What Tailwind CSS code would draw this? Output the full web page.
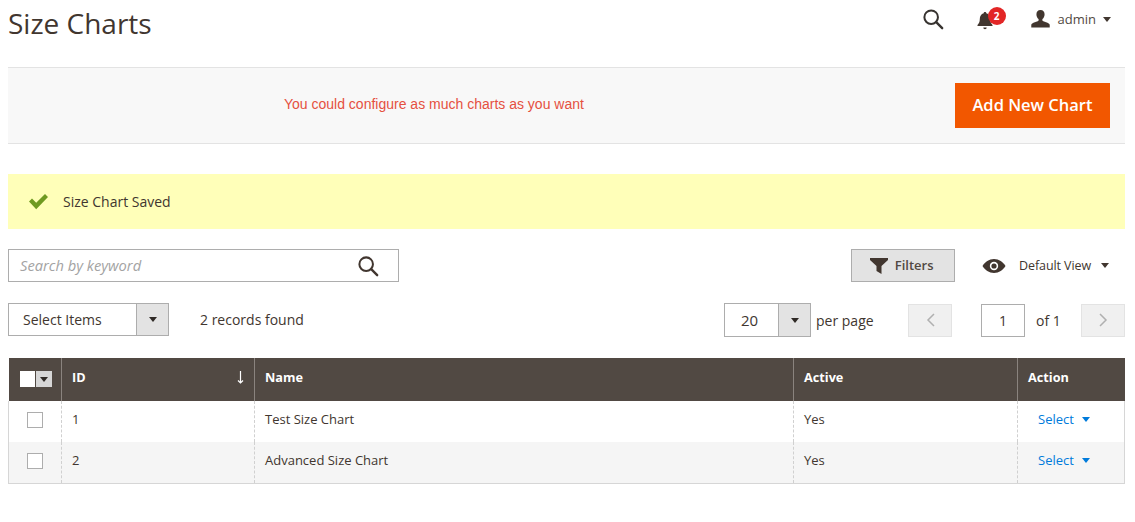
<!DOCTYPE html>
<html lang="en">
<head>
  <meta charset="UTF-8">
  <title>Size Charts</title>
  <script src="https://cdn.jsdelivr.net/npm/@tailwindcss/browser@4"></script>
</head>
<body class="bg-white font-['Open_Sans',sans-serif] text-[#41362f] overflow-hidden">
  <div class="w-[1135px] h-[522px] pl-2 pr-[10px]">

    <!-- Page header -->
    <header class="h-[67px] flex items-start justify-between">
      <h1 class="text-[28px] leading-[38px] mt-[4px] text-[#41362f]">Size Charts</h1>
      <div class="flex items-center mt-[7px] h-[24px]">
        <svg class="w-[22px] h-[22px] mr-[33px]" viewBox="0 0 24 24" fill="none" stroke="#373330" stroke-width="2.2"><circle cx="10" cy="10" r="7.4"/><path d="M15.5 15.5 22 22" stroke-linecap="round" stroke-width="2.6"/></svg>
        <div class="relative w-[16px] h-[20px] mr-[38px]">
          <svg class="w-[16px] h-[20px] mt-[2px]" viewBox="0 0 16 20" fill="#41362f"><path d="M8 1c.8 0 1.3.5 1.3 1.2C12 3 13.2 5.300 13.200 8c0 3 .8 4.500 2.300 6v1H.5v-1C2 12.500 2.800 11 2.800 8c0-2.700 1.200-5 3.900-5.800C6.700 1.500 7.200 1 8 1Z"/><path d="M6.300 16.500h3.400A1.700 1.700 0 0 1 8 18.300a1.700 1.700 0 0 1-1.700-1.800Z"/></svg>
          <span class="absolute -top-[2px] left-[11px] w-[18px] h-[18px] rounded-full bg-[#e22626] text-white text-[10px] leading-[18px] font-bold text-center">2</span>
        </div>
        <svg class="w-[19px] h-[18px] mr-[8px]" viewBox="0 0 20 20" preserveAspectRatio="none" fill="#41362f"><path d="M10 0c2.800 0 4.300 2 4.300 4.800 0 2.200-.9 4.200-2.200 5.300-.3.900-.2 1.800.5 2.200 2.500 1.200 6.400 1.900 7.100 4.200V19.500H.3v-3c.7-2.300 4.600-3 7.100-4.200.7-.4.800-1.300.5-2.200C6.600 9 5.700 7 5.700 4.800 5.700 2 7.200 0 10 0Z"/></svg>
        <span class="text-[13px] leading-[24px] -mt-px text-[#514943] mr-[7px]">admin</span>
        <span class="w-0 h-0 border-x-[4px] border-x-transparent border-t-[5px] border-t-[#41362f] mr-[14px]"></span>
      </div>
    </header>

    <!-- Action bar -->
    <div class="h-[77px] bg-[#f8f8f8] border-y border-[#e3e3e3] flex items-center justify-between pr-[15px]">
      <p class="ml-[276px] font-['Liberation_Sans',sans-serif] text-[14px] text-[#e5503f] -mt-[3px]">You could configure as much charts as you want</p>
      <button class="w-[155px] h-[45px] bg-[#f25700] text-white text-[16.500px] font-semibold">Add New Chart</button>
    </div>

    <!-- Success message -->
    <div class="h-[55px] mt-[30px] bg-[#ffffb9] flex items-center pl-[20px]">
      <svg class="w-[21px] h-[17px] mr-[14px]" viewBox="0 0 21 17" fill="#6f9a21"><path d="M1 8.600 4 5.600l4.200 4.200L17 1l3 3-11.800 12.200Z"/></svg>
      <span class="text-[14px] text-[#41362f]">Size Chart Saved</span>
    </div>

    <!-- Search and view -->
    <div class="h-[33px] mt-[20px] flex items-center justify-between">
      <div class="w-[391px] h-[33px] border border-[#adadad] flex items-center justify-between pl-[11px] pr-[19px]">
        <span class="text-[14.700px] italic text-[#a3a3a3]">Search by keyword</span>
        <svg class="w-[22px] h-[22px]" viewBox="0 0 24 24" fill="none" stroke="#41362f" stroke-width="2.200"><circle cx="10" cy="10" r="7.400"/><path d="M15.500 15.500 22 22" stroke-linecap="round" stroke-width="2.600"/></svg>
      </div>
      <div class="flex items-center">
        <button class="w-[104px] h-[33px] pr-[3px] bg-[#e3e3e3] border border-[#adadad] flex items-center justify-center gap-[7px] text-[13px] font-semibold text-[#514943]">
          <svg class="w-[18px] h-[16px]" viewBox="0 0 18 16" fill="#41362f"><path d="M0 0h18v2l-6.500 6v8l-5-3V8L0 2Z"/></svg>
          Filters
        </button>
        <svg class="w-[24px] h-[16px] ml-[27px]" viewBox="0 0 24 16"><path fill="#41362f" d="M12 1c5 0 9 3 11.500 7C21 12 17 15 12 15S3 12 .5 8C3 4 7 1 12 1Z"/><circle cx="12" cy="8" r="4.200" fill="#fff"/><circle cx="12" cy="8" r="2.600" fill="#41362f"/></svg>
        <span class="text-[12.500px] mt-px tracking-[-0.1px] text-[#41362f] ml-[13px] mr-[10px]">Default View</span>
        <span class="w-0 h-0 border-x-[4px] border-x-transparent border-t-[5px] border-t-[#41362f] mr-[16px]"></span>
      </div>
    </div>

    <!-- Mass actions and pager -->
    <div class="h-[34px] mt-[21px] flex items-start justify-between">
      <div class="flex items-center">
        <div class="w-[161px] h-[33px] border border-[#adadad] flex">
          <span class="flex-1 pl-[14px] text-[14px] leading-[31px] text-[#41362f]">Select Items</span>
          <span class="w-[32px] bg-[#e3e3e3] border-l border-[#adadad] flex items-center justify-center"><span class="w-0 h-0 border-x-[4px] border-x-transparent border-t-[5px] border-t-[#2f2a26]"></span></span>
        </div>
        <span class="ml-[31px] text-[14px] text-[#41362f]">2 records found</span>
      </div>
      <div class="flex items-center h-[34px]">
        <div class="w-[87px] h-[34px] border border-[#adadad] flex">
          <span class="flex-1 pr-[4px] text-center text-[15px] leading-[32px] text-[#41362f]">20</span>
          <span class="w-[32px] bg-[#e3e3e3] border-l border-[#adadad] flex items-center justify-center"><span class="w-0 h-0 border-x-[4px] border-x-transparent border-t-[5px] border-t-[#2f2a26]"></span></span>
        </div>
        <span class="ml-[5px] text-[14px] text-[#41362f] w-[92px]">per page</span>
        <span class="w-[44px] h-[33px] bg-[#f0f0f0] border border-[#e3e3e3] flex items-center justify-center">
          <svg class="w-[9px] h-[14px]" viewBox="0 0 9 14" fill="none" stroke="#b0b0b0" stroke-width="1.500"><path d="M8 1 2 7l6 6"/></svg>
        </span>
        <span class="w-[44px] h-[33px] ml-[29px] border border-[#adadad] text-center text-[14px] leading-[31px] text-[#41362f]">1</span>
        <span class="ml-[11px] text-[14px] text-[#41362f] w-[45px]">of 1</span>
        <span class="w-[44px] h-[33px] bg-[#f0f0f0] border border-[#e3e3e3] flex items-center justify-center">
          <svg class="w-[9px] h-[14px]" viewBox="0 0 9 14" fill="none" stroke="#b0b0b0" stroke-width="1.500"><path d="m1 1 6 6-6 6"/></svg>
        </span>
      </div>
    </div>

    <!-- Grid -->
    <table class="mt-[21px] w-[1117px] table-fixed border-collapse text-[13px] text-[#41362f]">
      <thead>
        <tr class="h-[43px] bg-[#514943] text-white text-left text-[12.700px] font-bold">
          <th class="w-[53px] pb-[1px] border-r border-[#8a837e]">
            <div class="ml-[11px] flex w-[32px] h-[16px]">
              <span class="w-[15px] bg-white"></span>
              <span class="flex-1 ml-px bg-[#d6d6d6] flex items-center justify-center"><span class="w-0 h-0 border-x-[4px] border-x-transparent border-t-[5px] border-t-[#2f2a26]"></span></span>
            </div>
          </th>
          <th class="w-[193px] px-[10px] pb-[4px] border-r border-[#8a837e]">
            <div class="flex items-center justify-between">ID
              <svg class="w-[7px] h-[13px]" viewBox="0 0 7 13" fill="none" stroke="#fff" stroke-width="1.200"><path d="M3.500 0v12M1 9.500 3.500 12 6 9.500"/></svg>
            </div>
          </th>
          <th class="w-[539px] px-[10px] pb-[4px] border-r border-[#8a837e]">Name</th>
          <th class="w-[224px] px-[10px] pb-[4px] border-r border-[#8a837e]">Active</th>
          <th class="px-[10px] pb-[4px]">Action</th>
        </tr>
      </thead>
      <tbody>
        <tr class="h-[41px] bg-white">
          <td class="pb-[3px] border-l border-l-[#d6d6d6] border-r border-r-[#d0d0d0] [border-right-style:dashed]"><span class="block ml-[18px] w-[16px] h-[16px] border border-[#adadad] bg-white"></span></td>
          <td class="px-[10px] pb-[4px] border-r border-dashed border-r-[#d0d0d0]">1</td>
          <td class="px-[10px] pb-[4px] border-r border-dashed border-r-[#d0d0d0]">Test Size Chart</td>
          <td class="px-[10px] pb-[4px] border-r border-dashed border-r-[#d0d0d0]">Yes</td>
          <td class="pl-[20px] pb-[4px] border-r border-r-[#d6d6d6] text-[#007bdb]">Select<span class="inline-block align-middle ml-[8px] mb-[1px] w-0 h-0 border-x-[4px] border-x-transparent border-t-[5px] border-t-[#007bdb]"></span></td>
        </tr>
        <tr class="h-[41px] bg-[#f5f5f5] border-b border-[#d6d6d6]">
          <td class="pb-[3px] border-l border-l-[#d6d6d6] border-r border-r-[#d0d0d0] [border-right-style:dashed]"><span class="block ml-[18px] w-[16px] h-[16px] border border-[#adadad] bg-white"></span></td>
          <td class="px-[10px] pb-[4px] border-r border-dashed border-r-[#d0d0d0]">2</td>
          <td class="px-[10px] pb-[4px] border-r border-dashed border-r-[#d0d0d0]">Advanced Size Chart</td>
          <td class="px-[10px] pb-[4px] border-r border-dashed border-r-[#d0d0d0]">Yes</td>
          <td class="pl-[20px] pb-[4px] border-r border-r-[#d6d6d6] text-[#007bdb]">Select<span class="inline-block align-middle ml-[8px] mb-[1px] w-0 h-0 border-x-[4px] border-x-transparent border-t-[5px] border-t-[#007bdb]"></span></td>
        </tr>
      </tbody>
    </table>
  </div>
</body>
</html>
